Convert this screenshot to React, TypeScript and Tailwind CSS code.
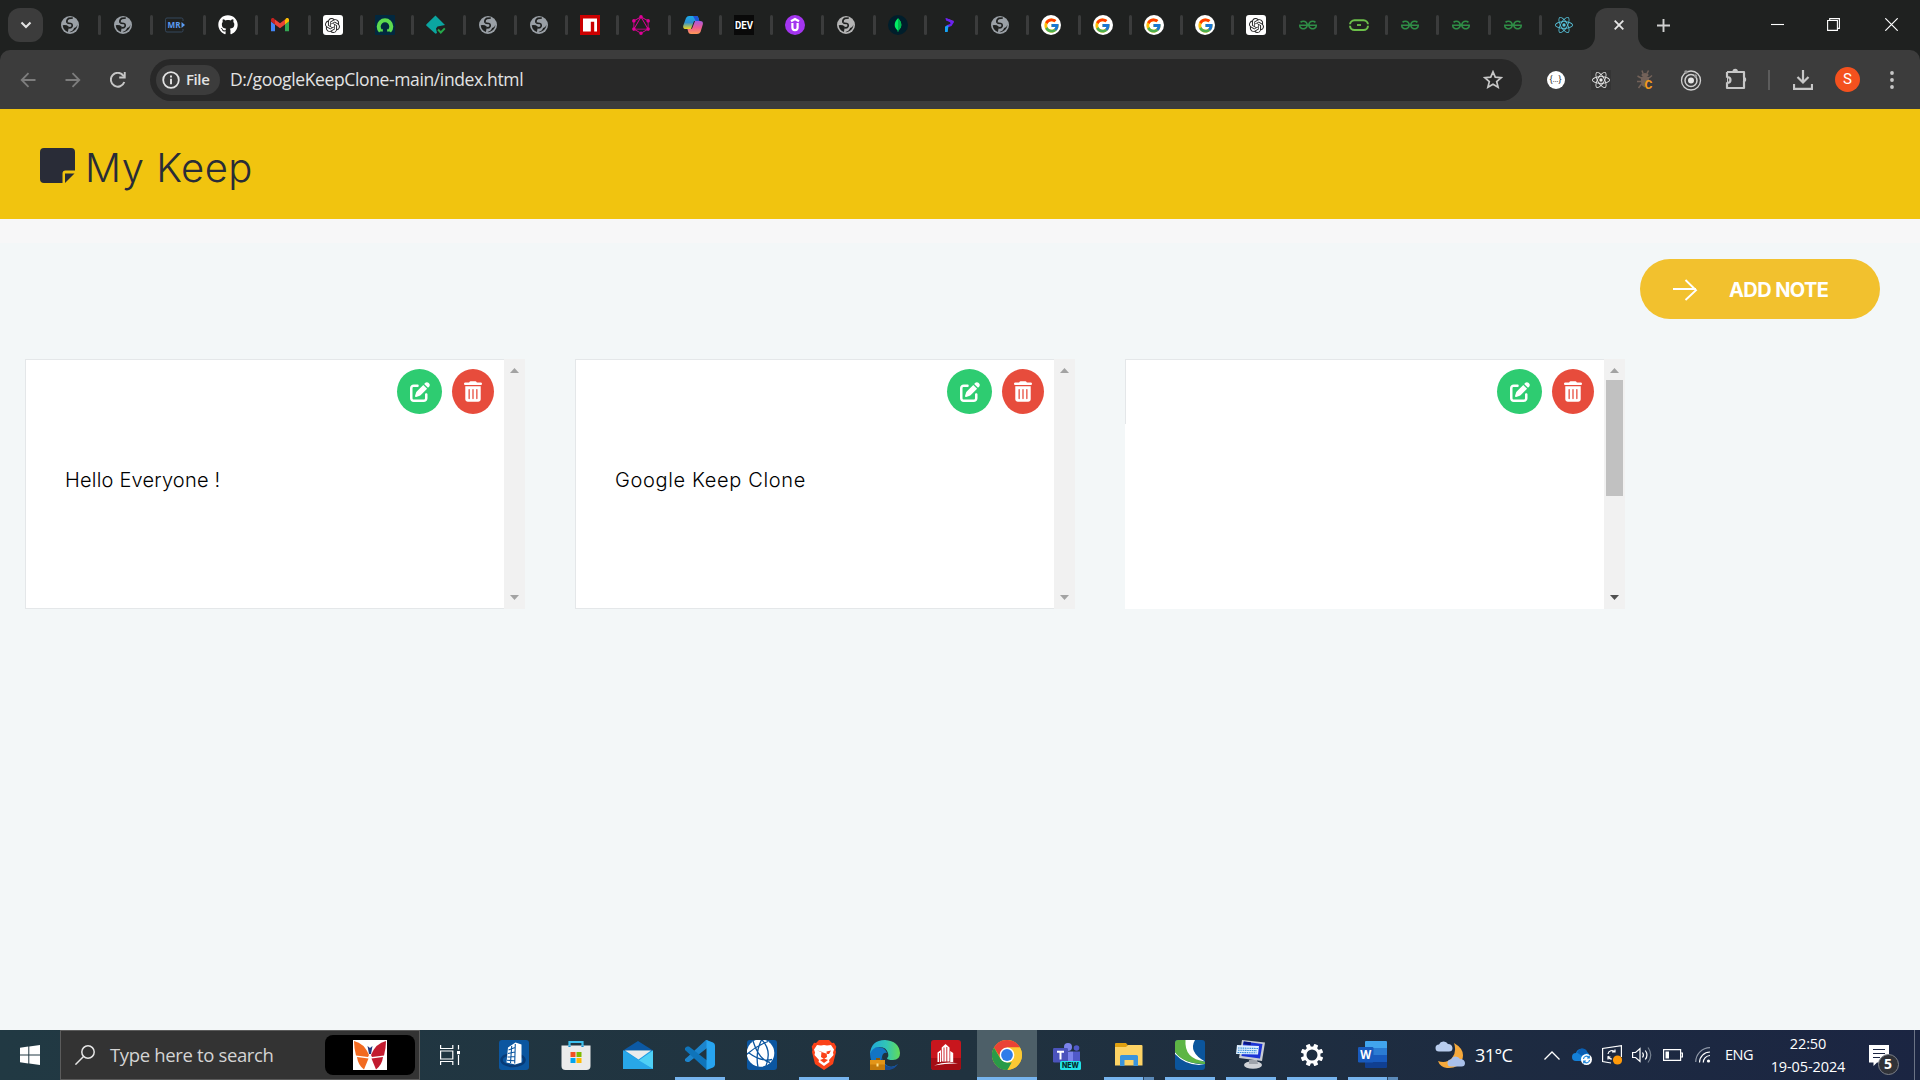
import React, { ReactNode } from "react";
import { FaGithub } from "react-icons/fa";
import { FaPenToSquare, FaTrashCan } from "react-icons/fa6";
import { FcGoogle } from "react-icons/fc";
import { SiOpenai, SiGraphql, SiGeeksforgeeks, SiReact } from "react-icons/si";

const Globe = ({ color = "#9aa0a6" }: { color?: string }) => (
  <svg viewBox="0 0 20 20" className="size-5">
    <circle cx="10" cy="10" r="9" fill={color} />
    <path d="M12.800 3 9 3.300Q6.300 4.800 7 7.300q.6 1.200 3.800 1.200 1.600.3 1.400 2 .2 1.300-1.400 2.200l-2.300.2" fill="none" stroke="#1f2120" strokeWidth="1.700" />
    <path d="M2.700 10.300q3.800-.7 6 1.200.6 1.600-.4 3l-.3 2.600Q3.300 15.500 2.700 10.300Z" fill="#1f2120" />
    <path d="M17.300 9.500q.2 4-3.300 6.300-2.200 1.600-4.500 1.300 3.500-1 4-2.800.3-1.500 1.800-1.800 1.600-.6 2-3Z" fill="#1f2120" />
  </svg>
);
const Gfg = () => <SiGeeksforgeeks className="size-[18px] text-[#2f8d46]" />;
const GoogleTab = () => (
  <span className="flex size-5 items-center justify-center rounded-full bg-white">
    <FcGoogle className="size-[17px]" />
  </span>
);
const OpenAiTab = () => (
  <span className="flex size-5 items-center justify-center rounded-[3px] bg-white">
    <SiOpenai className="size-[15px] text-[#222]" />
  </span>
);
const MrTab = () => (
  <svg viewBox="0 0 20 20" className="size-5 overflow-visible">
    <path d="M18 6V4.500Q18 3 16.500 3H2Q.5 3 .5 4.500V15.500Q.5 17 2 17H16.500Q18 17 18 15.500V14" fill="none" stroke="#35485c" />
    <text x="2.500" y="13.200" fontSize="9.500" fontWeight="700" textLength="13" lengthAdjust="spacingAndGlyphs" fill="#5b9bf0" fontFamily="Open Sans, sans-serif">MR</text>
    <path d="M16.500 7 20 10l-3.500 3Z" fill="#5b9bf0" />
  </svg>
);
const Gmail = () => (
  <svg viewBox="0 0 20 20" className="size-5">
    <path d="M1 5v11.200h4V9.500L1 6.500Z" fill="#4285f4" />
    <path d="M15 9.500v6.700h4V6.500Z" fill="#34a853" />
    <path d="M15 4.500v5l4-3V4.600c0-1.700-2-2-3-1.200Z" fill="#fbbc04" />
    <path d="M5 4.500 10 8.300l5-3.800v5l-5 3.800-5-3.800Z" fill="#ea4335" />
    <path d="M1 4.600c0-1.700 2-2 3-1.200l1 1.100v5l-4-3Z" fill="#c5221f" />
  </svg>
);
const GreenA = () => (
  <svg viewBox="0 0 20 20" className="size-5">
    <rect width="20" height="20" rx="1" fill="#02283f" />
    <path d="M5.500 16A6.300 6.300 0 1 1 14.500 16" fill="none" stroke="#5ddb4f" strokeWidth="4" />
    <path d="M7.600 13.800 4 16.500h4Zm4.800 0 3.600 2.700h-4Z" fill="#5ddb4f" />
  </svg>
);
const TealDiamond = () => (
  <svg viewBox="0 0 20 20" className="size-5">
    <path d="M9.500.5 19 10l-7.500 1.500-1.500 2 1 4.500-1.500.7L.5 10.800q-.6-.8 0-1.600Z" fill="#0ba5a0" />
    <path d="m12 14.500 2.800 3 4-4.200" fill="none" stroke="#25a94b" strokeWidth="1.900" />
  </svg>
);
const Npm = () => (
  <svg viewBox="0 0 20 20" className="size-5">
    <rect width="20" height="20" fill="#cb0000" />
    <path d="M3 3.500h14v13h-2.800V6.800h-3.400v9.700H3Z" fill="#fff" />
  </svg>
);
const Copilot = () => (
  <svg viewBox="0 0 20 20" className="size-5">
    <defs>
      <linearGradient id="cpa" x1="0" y1="0" x2="0" y2="1"><stop stopColor="#1ba9e8" /><stop offset=".5" stopColor="#2f8fcf" /><stop offset="1" stopColor="#f2d61e" /></linearGradient>
      <linearGradient id="cpb" x1="0" y1="0" x2="0" y2="1"><stop stopColor="#a65be0" /><stop offset=".5" stopColor="#ee5b93" /><stop offset="1" stopColor="#ff9a56" /></linearGradient>
    </defs>
    <path d="M6 1h7.500q1.500 0 2 2l.8 3H11L8 14H3Q-.5 14 .3 10.500L3 3Q4 1 6 1Z" fill="url(#cpa)" />
    <path d="M10 1h3.500q1.500 0 2 2l.8 3h-3.500Z" fill="#2054d8" />
    <path d="M14 19H8q-2.500 0-3-3l-.6-2H8q1 0 1.500-1.500L12 6h5q3.500 0 2.800 3.500L17.500 17q-1 2-3.500 2Z" fill="url(#cpb)" />
  </svg>
);
const Dev = () => (
  <svg viewBox="0 0 20 20" className="size-5 overflow-visible">
    <rect width="20" height="20" fill="#090909" />
    <text x="1" y="14" fontSize="11.500" fontWeight="700" textLength="18" lengthAdjust="spacingAndGlyphs" fill="#fff" fontFamily="Roboto, sans-serif">DEV</text>
  </svg>
);
const Udemy = () => (
  <svg viewBox="0 0 20 20" className="size-5">
    <circle cx="10" cy="10" r="10" fill="#a435f0" />
    <path d="m6 6.300 4-2.300 4 2.300M7.400 8v4.500a2.600 2.600 0 0 0 5.200 0V8" fill="none" stroke="#fff" strokeWidth="2.200" />
  </svg>
);
const Mongo = () => (
  <svg viewBox="0 0 20 20" className="size-5">
    <circle cx="10" cy="10" r="10" fill="#001e2b" />
    <path d="M10 3.200c2 2 3.300 4 3.300 6.800 0 2.400-1.400 4-2.800 5.300l-.2 1.500h-.6l-.2-1.500C8 14 6.700 12.400 6.700 10c0-2.800 1.300-4.800 3.300-6.800Z" fill="#00ed64" />
    <path d="M10 3.200c2 2 3.300 4 3.300 6.800 0 2.400-1.400 4-2.800 5.300H10Z" fill="#00b84f" />
  </svg>
);
const PMark = () => (
  <svg viewBox="0 0 20 20" className="size-5">
    <path d="M6.500 3 10 4.200l5 1.800-1.500 2.500-2-.8Z" fill="#8a2be8" />
    <path d="m6.500 3 4.500 1.500 4 2.500-2.500 4-5.500 2 .5-2.700 3.500-1.300 1-1.500-5-2Z" fill="#6a22f0" />
    <path d="m6 11.500 3.500-1.200-.8 6.700H6Z" fill="#14a3f5" />
  </svg>
);
const GreenPill = () => (
  <svg viewBox="0 0 20 20" className="size-5">
    <rect x="1" y="5.300" width="18" height="9.700" rx="4.500" fill="none" stroke="#6cc04a" strokeWidth="2" />
    <path d="M0 9.200h2v1.600H0zM18 9.200h2v1.600h-2z" fill="#1f2120" />
    <path d="M8 10h4" stroke="#6cc04a" strokeWidth="1.800" />
  </svg>
);

const tabs: ReactNode[] = [
  <Globe />, <Globe />, <MrTab />, <FaGithub className="size-5 text-white" />, <Gmail />, <OpenAiTab />, <GreenA />, <TealDiamond />,
  <Globe />, <Globe />, <Npm />, <SiGraphql className="size-5 text-[#e10098]" />, <Copilot />, <Dev />, <Udemy />, <Globe color="#b4b4b4" />,
  <Mongo />, <PMark />, <Globe />, <GoogleTab />, <GoogleTab />, <GoogleTab />, <GoogleTab />, <OpenAiTab />, <Gfg />, <GreenPill />,
  <Gfg />, <Gfg />, <Gfg />, <SiReact className="size-[18px] text-[#58c4dc]" />,
];

function TabStrip() {
  return (
    <div className="flex h-[50px] bg-[#1f2120]">
      <div className="mt-2 ml-2 flex h-[34px] w-[35px] items-center justify-center rounded-xl bg-[#3c3c3c]">
        <svg viewBox="0 0 12 8" className="h-2 w-3"><path d="m1.500 1.500 4.500 4.500 4.500-4.500" fill="none" stroke="#e3e3e3" strokeWidth="2.100" /></svg>
      </div>
      <div className="ml-[5px] flex h-[50px] w-[1547px] items-center">
        {tabs.map((icon, i) => (
          <div key={i} className={`${i < 6 ? "w-[52.5px]" : "w-[51.26px]"} flex shrink-0 items-center pl-3`}>
            <span className="flex size-5 items-center justify-center">{icon}</span>
            {i < 29 && <span className="ml-auto h-5 w-[3px] rounded-sm bg-[#3b3c3c]" />}
          </div>
        ))}
      </div>
      <div className="relative mt-2 flex h-[42px] w-[43px] items-center justify-center rounded-t-xl bg-[#3c3c3c] pb-2 pl-1">
        <svg viewBox="0 0 14 14" className="absolute bottom-0 -left-[14px] size-[14px]"><path d="M0 14A14 14 0 0 0 14 0V14Z" fill="#3c3c3c" /></svg>
        <svg viewBox="0 0 14 14" className="absolute -right-[14px] bottom-0 size-[14px]"><path d="M0 0A14 14 0 0 0 14 14H0Z" fill="#3c3c3c" /></svg>
        <svg viewBox="0 0 10 10" className="size-[10px]"><path d="m.7.7 8.600 8.600M9.300.7.7 9.300" stroke="#e6e6e6" strokeWidth="1.800" /></svg>
      </div>
      <svg viewBox="0 0 13 13" className="mt-[18.5px] ml-[19px] size-[13px]"><path d="M6.500 0v13M0 6.500h13" stroke="#d0d0d0" strokeWidth="1.900" /></svg>
      <svg viewBox="0 0 13 13" className="mt-[18px] ml-[101px] size-[13px]"><path d="M0 6.500h13" stroke="#fff" strokeWidth="1.100" /></svg>
      <svg viewBox="0 0 13 13" className="mt-[18px] ml-[43px] size-[13px]"><path d="M.6 2.500h9.800v9.900H.6ZM2.700 2.500V.6h9.700v9.800h-2" fill="none" stroke="#fff" strokeWidth="1.100" /></svg>
      <svg viewBox="0 0 13 13" className="mt-[18px] ml-[45px] size-[13px]"><path d="m.3.3 12.400 12.400M12.700.3.3 12.700" stroke="#fff" strokeWidth="1.200" /></svg>
    </div>
  );
}

const Slot = ({ w, children }: { w: string; children: ReactNode }) => (
  <div className={`${w} flex shrink-0 items-center justify-center`}>{children}</div>
);

function Toolbar() {
  return (
    <div className="bg-[#1f2120]">
      <div className="flex h-[59px] items-center rounded-t-[10px] bg-[#3c3c3c] pl-[6px]">
        <Slot w="w-[44px]"><svg viewBox="0 0 16 16" className="size-4"><path d="M15.500 8H2M8.500 1.200 1.700 8l6.800 6.800" fill="none" stroke="#7d7d7d" strokeWidth="1.800" /></svg></Slot>
        <Slot w="w-[45px]"><svg viewBox="0 0 16 16" className="size-4"><path d="M.5 8H14M7.500 1.200 14.300 8l-6.800 6.800" fill="none" stroke="#7d7d7d" strokeWidth="1.800" /></svg></Slot>
        <Slot w="w-[46px]"><svg viewBox="0 0 16 16" className="size-4"><path d="M14.300 10A6.900 6.900 0 1 1 13.300 3.600L14 4.500" fill="none" stroke="#c7c7c7" strokeWidth="2" /><path d="M15.700 0v6.500H9.200V4.600h4.600V0Z" fill="#c7c7c7" /></svg></Slot>
        <div className="ml-[9px] flex h-[42px] w-[1372px] items-center rounded-full bg-[#282828] pl-[6px]">
          <div className="flex h-[30px] w-16 items-center rounded-full bg-[#3c3c3c] pl-[6px]">
            <svg viewBox="0 0 18 18" className="size-[18px]"><circle cx="9" cy="9" r="7.800" fill="none" stroke="#e3e3e3" strokeWidth="1.800" /><path d="M9 7.800v5.400M9 4.600v2" stroke="#e3e3e3" strokeWidth="1.900" /></svg>
            <span className="ml-[6px] font-['Open_Sans'] text-[15px] font-semibold tracking-[-0.4px] text-[#e3e3e3]">File</span>
          </div>
          <span className="ml-[10px] font-['Open_Sans'] text-[17.5px] tracking-[-0.37px] whitespace-nowrap text-[#e3e3e3]">D:/googleKeepClone-main/index.html</span>
          <svg viewBox="0 0 20 20" className="mr-[19px] ml-auto size-5"><path d="m10 1.800 2.300 5.400 5.900.5-4.500 3.900 1.400 5.700L10 14.200l-5.100 3.100 1.400-5.700L1.800 7.700l5.900-.5Z" fill="none" stroke="#c7c7c7" strokeWidth="1.700" /></svg>
        </div>
        <div className="ml-[11px] flex">
          <Slot w="w-[45px]"><span className="flex size-[18px] items-center justify-center rounded-full bg-white font-['Roboto'] text-[9px] leading-none text-[#333]">{"{…}"}</span></Slot>
          <Slot w="w-[45px]"><span className="flex size-5 items-center justify-center bg-[#343434]"><SiReact className="size-[18px] text-[#e8e8e8]" /></span></Slot>
          <Slot w="w-[45px]">
            <svg viewBox="0 0 20 20" className="size-5 overflow-visible">
              <path d="M7 3.500 6 .5m5 3L12.500.5M5 8 1.500 6M5 11.500H1M5.500 14 2.500 18M13 8l3-2.500" fill="none" stroke="#736259" strokeWidth="1.500" />
              <ellipse cx="9" cy="5" rx="3.500" ry="2" fill="#736259" /><path d="M5 7h8v4l-4 6.500Q5 16 5 12Z" fill="#736259" />
              <text x="8.500" y="18.600" fontSize="12" fontWeight="700" fill="#f59a1b" fontFamily="Roboto, sans-serif">C</text>
            </svg>
          </Slot>
          <Slot w="w-[46px]">
            <svg viewBox="0 0 22 22" className="size-[22px]"><circle cx="11" cy="11.500" r="9.500" fill="none" stroke="#d0d0d0" strokeWidth="1.300" /><circle cx="11" cy="11.500" r="6" fill="none" stroke="#d0d0d0" strokeWidth="1.500" /><circle cx="11" cy="11.500" r="3" fill="#e4e4e4" /><circle cx="6" cy="3" r="1.800" fill="#999" /><circle cx="15.500" cy="7" r="1.700" fill="#999" /></svg>
          </Slot>
          <Slot w="w-[45px]">
            <svg viewBox="0 0 22 22" className="size-[22px] -translate-x-[1px] -translate-y-[1px]"><path d="M2 4h17v5.500M19 13v7H2V4M2 4v5q3.500 0 3.500 3T2 15" fill="none" stroke="#c7c7c7" strokeWidth="2.200" strokeLinejoin="round" /><path d="M.5 9.800h1.500v4.400H.5z" fill="#3c3c3c" /><path d="M7.500 3.500a2.700 2.700 0 0 1 5.400 0ZM18.500 8.800a2.700 2.700 0 0 1 0 5.400ZM18 8.800h2v5.400h-2z" fill="#c7c7c7" /></svg>
          </Slot>
        </div>
        <span className="ml-[9px] h-5 w-[2px] bg-[#5c5c5c]" />
        <svg viewBox="0 0 20 20" className="ml-[23px] size-5"><path d="M10 0v12M4.500 7 10 12.500 15.500 7M1 14v4.800h18V14" fill="none" stroke="#c7c7c7" strokeWidth="2.200" /></svg>
        <span className="ml-[22px] flex size-[25px] items-center justify-center rounded-full bg-[#f4511e] font-['Roboto'] text-[15px] text-white">S</span>
        <svg viewBox="0 0 4 18" className="ml-[30px] h-[18px] w-1"><circle cx="2" cy="2" r="1.900" fill="#c7c7c7" /><circle cx="2" cy="9" r="1.900" fill="#c7c7c7" /><circle cx="2" cy="16" r="1.900" fill="#c7c7c7" /></svg>
      </div>
    </div>
  );
}

function Note({ text, tracking, scroll }: { text?: string; tracking?: string; scroll?: boolean }) {
  return (
    <div className="flex h-[250px] w-[500px] bg-white">
      <div className={`flex w-[479px] flex-col border-[#e4e7e9] ${scroll ? "border-t" : "border-y border-l"}`}>
        <div className={`flex justify-end gap-[10px] pt-[9px] pr-[10px] ${scroll ? "h-16 border-l border-[#e4e7e9]" : "h-[54px]"}`}>
          <span className="flex h-[45px] w-[45px] items-center justify-center rounded-[50%] bg-[#2ecc71]"><FaPenToSquare className="size-5 text-white" /></span>
          <span className="flex h-[45px] w-[42px] items-center justify-center rounded-[50%] bg-[#e74c3c]"><FaTrashCan className="h-[21px] w-[18px] text-white" /></span>
        </div>
        {text && <p className={`${tracking} mt-[51px] pl-[39px] font-['Inter'] text-[20px] leading-[30px] font-[350] text-black`}>{text}</p>}
      </div>
      <div className="flex w-[21px] flex-col items-center bg-[#f1f1f1] py-[9px]">
        <svg viewBox="0 0 9 5" className="h-[5px] w-[9px]"><path d="M0 5 4.500 0 9 5Z" fill="#a3a3a3" /></svg>
        {scroll && <span className="mt-[7px] h-[116px] w-[17px] bg-[#c1c1c1]" />}
        <svg viewBox="0 0 9 5" className="mt-auto h-[5px] w-[9px]"><path d="M0 0h9L4.500 5Z" fill={scroll ? "#505050" : "#a3a3a3"} /></svg>
      </div>
    </div>
  );
}

function Page() {
  return (
    <main className="flex h-[921px] flex-col bg-[#f3f7f8]">
      <header className="flex h-[110px] items-center bg-[#f1c40f] pl-10 text-[#292c37]">
        <svg viewBox="0 0 35 35" className="mt-[3px] size-[35px]">
          <path d="M4 0h27q4 0 4 4v18.500H25.500q-3 0-3 3V35H4q-4 0-4-4V4q0-4 4-4Z" fill="currentColor" />
          <path d="M25 25.500h9.500L25 35Z" fill="currentColor" />
        </svg>
        <h1 className="mt-[7px] ml-[10px] font-['Inter'] text-[40px] leading-none font-[320] tracking-[0.5px]">My Keep</h1>
      </header>
      <div className="h-6 bg-[#f7f7f8]" />
      <div className="flex justify-end pt-4 pr-10">
        <button className="flex h-[60px] w-[240px] items-center rounded-[30px] bg-[#f2c12e] pl-[33px]">
          <svg viewBox="0 0 25 22" className="h-[22px] w-[25px] translate-y-[1px]"><path d="M0 10h23M12.500 1 23 11.200 12.500 21" fill="none" stroke="#fff" strokeWidth="1.900" /></svg>
          <span className="mt-[2px] ml-[31px] font-['Inter'] text-[20px] font-bold tracking-[-0.6px] whitespace-nowrap text-white">ADD NOTE</span>
        </button>
      </div>
      <section className="mt-10 flex gap-[50px] pl-[25px]">
        <Note text="Hello Everyone !" tracking="tracking-[0.2px]" />
        <Note text="Google Keep Clone" tracking="tracking-[0.65px]" />
        <Note scroll />
      </section>
    </main>
  );
}

const Building = () => (
  <svg viewBox="0 0 30 30" className="size-[30px]">
    <rect width="30" height="30" rx="3" fill="#0b56a0" /><ellipse cx="14" cy="20" rx="11.500" ry="6" fill="none" stroke="#073b78" strokeWidth="2.500" />
    <path d="m9 7.500 7.500-5 6 2v18L16 24.500l-8.500-2Z" fill="#fff" />
    <path d="m16.300 4-.6 19.500M9.500 10l6.500-2.500M9 13.500l6.700-1.500M8.500 17l7-.5M8 20.300l7.500.5M12.700 6 11.500 23" fill="none" stroke="#0b56a0" strokeWidth="1.100" />
  </svg>
);
const Store = () => (
  <svg viewBox="0 0 30 30" className="size-[30px]">
    <path d="M8.500 7V2h13v5" fill="none" stroke="#3cc0ee" strokeWidth="2.200" />
    <path d="M.5 5.500h29V26q0 4-4 4h-21q-4 0-4-4Z" fill="#ebebeb" />
    <path d="M9.500 12h5v5h-5z" fill="#f25022" /><path d="M15.500 12h5v5h-5z" fill="#7fba00" /><path d="M9.500 18h5v5h-5z" fill="#00a4ef" /><path d="M15.500 18h5v5h-5z" fill="#ffb900" />
    <path d="M8.500 5.500V7M21.500 5.500V7" stroke="#1590d0" strokeWidth="2.200" />
  </svg>
);
const Mail = () => (
  <svg viewBox="0 0 30 30" className="size-[30px]">
    <path d="M0 10.500 15 1l15 9.500Z" fill="#0c59a4" /><path d="M0 10.500h30v18.500H0Z" fill="#1f9be2" />
    <path d="M2 10.500h26L15.500 19.500Z" fill="#ececec" /><path d="m30 10.500-15 10.500L30 29Z" fill="#4fd0f5" /><path d="m0 10.500 30 18.500H0Z" fill="#28a7e8" />
  </svg>
);
const VsCode = () => (
  <svg viewBox="0 0 30 30" className="size-[30px]">
    <path d="M22 0 3 17.500 0 20v2l2 1h2L24 7.500Z" fill="#1c84cc" transform="translate(0 -1)" />
    <path d="M2 6.500 0 8v2l22 20 2-8L4 6.500Z" fill="#0f74ba" /><path d="m21.500 0 6.500 2.500q2 .8 2 3v19q0 2.200-2 3L21.500 30Z" fill="#27a4f0" />
  </svg>
);
const Ball = () => (
  <svg viewBox="0 0 30 30" className="size-[30px]">
    <defs><clipPath id="ballclip"><rect width="30" height="30" rx="3" /></clipPath></defs>
    <g clipPath="url(#ballclip)">
      <rect width="30" height="30" fill="#0b56a0" /><circle cx="13.500" cy="13" r="13.800" fill="#fff" />
      <path d="M-1 15Q9 6 21 1.500M6 1Q12 20 23 22.500M2 13Q14 22 25 19.500M15-1Q8 12 11 27M15 0Q25 10 19 26" fill="none" stroke="#0b56a0" strokeWidth="1.300" />
    </g>
  </svg>
);
const Brave = () => (
  <svg viewBox="0 0 30 30" className="size-[30px]">
    <path d="M7 3 10 0h10l3 3 2-.3 2.300 4L26.500 10 27 12l-3 12-9 6-9-6L3 12l.5-2L2.700 6.700l2.300-4Z" fill="#fb4218" />
    <path d="m8 5 4 .6 3-.6 3 .6 4-.6 3 4.500-1 3 .5 2.500-4.500 5 .5 2-5.500 4-5.500-4 .5-2-4.500-5 .5-2.500-1-3Z" fill="#fff" />
    <path d="m8 10.500 4.500 1-.5 5.500 3 2 3-2-.5-5.500 4.500-1-2 3.500-1.500 0m-7 0H10Z" fill="#fb4218" /><path d="m11 20 4-1.500L19 20l-4 3Z" fill="#fb4218" />
  </svg>
);
const Edge = () => (
  <svg viewBox="0 0 30 30" className="size-[30px]">
    <defs><linearGradient id="edg"><stop stopColor="#1fa8dc" /><stop offset=".55" stopColor="#32c5b5" /><stop offset="1" stopColor="#63dc57" /></linearGradient></defs>
    <path d="M0 14Q1 7 8 7q7 0 9 6-4-1-5 4 0 6 6 9 5 2 10-2-5 6-13 6Q1 29 0 14Z" fill="#1274c4" />
    <path d="M12 17q-1 8 8 10 5 0 8-3-4 7-14 6-6-5-2-13Z" fill="#184a90" />
    <path d="M0 14Q1 0 15 0q14 1 15 13 0 7-7 7-6 0-6-2 2-1 1-5Q16 6 8 7 2 8 0 14Z" fill="url(#edg)" />
    <path d="M0 20h15v10H0Z" fill="#c47a0a" /><path d="M0 20h15v4.500H0Z" fill="#e39518" /><path d="M6 18h4v2H6Z" fill="#8c5706" /><path d="M6.500 23.500h2v3h-2z" fill="#ffe28a" />
  </svg>
);
const RedTower = () => (
  <svg viewBox="0 0 30 30" className="size-[30px]">
    <rect width="30" height="30" rx="3" fill="#c8161d" /><path d="M0 18h30v9q0 3-3 3H3q-3 0-3-3Z" fill="#a50d14" />
    <path d="M6.500 12.500 10 10v12H6.500ZM10.700 7.500 14.500 4l4 3.500v14h-7.800ZM19.200 11l3 2v9h-3ZM3 25.500q11-4.500 24-2-10-.5-24 2Z" fill="#fff" />
    <path d="M13 7.500v14M15.800 7v15M8.500 13v9" stroke="#c8161d" strokeWidth=".9" />
  </svg>
);
const Chrome = () => (
  <svg viewBox="0 0 30 30" className="size-[30px]">
    <circle cx="15" cy="15" r="15" fill="#ffc61a" />
    <path d="M2 7.500A15 15 0 0 1 28 7.500H15L9 18.500Z" fill="#ea4335" /><path d="M2 7.500 8.500 18.750 15 22.500h6L15.500 30A15 15 0 0 1 2 7.500Z" fill="#2a9a48" />
    <path d="M28 7.500A15 15 0 0 1 15.500 30L21.500 19 22.500 15 15 7.500Z" fill="#fcc934" />
    <circle cx="15" cy="15" r="7.400" fill="#fff" /><circle cx="15" cy="15" r="5.900" fill="#2f7de9" />
  </svg>
);
const Teams = () => (
  <svg viewBox="0 0 30 30" className="size-[30px] overflow-visible">
    <circle cx="15" cy="7" r="4" fill="#7b83eb" /><circle cx="23.500" cy="8" r="2.800" fill="#5059c9" />
    <path d="M10 11.500h10V25H10Z" fill="#7b83eb" /><path d="M20 11.500h7V22h-7Z" fill="#5059c9" /><rect y="8" width="15" height="14.500" rx="1.200" fill="#4b53bc" />
    <path d="M4 11.800h7M7.500 12v7.500" stroke="#fff" strokeWidth="2" /><rect x="7" y="21" width="21" height="9" rx="1.500" fill="#22e0e6" />
    <text x="9" y="28.400" fontSize="8" fontWeight="800" textLength="17" lengthAdjust="spacingAndGlyphs" fill="#062a2c" fontFamily="Inter, sans-serif">NEW</text>
  </svg>
);
const Explorer = () => (
  <svg viewBox="0 0 30 30" className="size-[30px]">
    <path d="M1 4q0-1 1-1h10l2 2.500V9H1Z" fill="#e0a010" /><path d="M1 7h11l2-2h13.500q1 0 1 1v19.500H1Z" fill="#fdd365" />
    <path d="M6 26V16.500q0-1.500 1.500-1.500h15q1.500 0 1.500 1.500V26h-4.500v-6H10.500v6Z" fill="#3a94dc" />
  </svg>
);
const Wave = () => (
  <svg viewBox="0 0 30 30" className="size-[30px]">
    <rect width="30" height="30" rx="3" fill="#0b559c" />
    <path d="M0 12Q10 24 30 24.500Q12 27 0 14Z" fill="#fff" /><path d="M3 0h8Q10 17 30 22v2Q8 24 0 12V3q0-3 3-3Z" fill="#5db545" />
    <path d="M10.500 0H20Q13 12 30 21.500Q9 19 10.500 0Z" fill="#fff" />
  </svg>
);
const OldPc = () => (
  <svg viewBox="0 0 30 30" className="size-[30px]">
    <ellipse cx="17" cy="25" rx="9" ry="3.800" fill="#cfd2d6" /><path d="m13 20 8 0 1 4h-9Z" fill="#9ea3aa" />
    <path d="m6 0 23 2.500-3 18.500L3 18Z" fill="#c9ccd2" /><path d="m7.500 1.500 19 2.500-2.500 14.500L5.500 16Z" fill="#1c34d6" /><path d="m8 1.500 7 .8-.3 3L7.500 4Z" fill="#0a1580" />
    <path d="m1 5 22 1-1 8.500L0 14Z" fill="#ddeeff" /><path d="m2 8 20 .5M2 10.200l19 .5M1.500 12.500l19 .3" stroke="#3c8fd8" strokeWidth="1.100" strokeDasharray="1.600 .7" />
  </svg>
);
const Gear = () => (
  <svg viewBox="0 0 30 30" className="size-[30px]">
    <circle cx="15" cy="15" r="7" fill="none" stroke="#fff" strokeWidth="3" />
    <g fill="#fff">
      {[22.5, 67.5, 112.5, 157.5, 202.5, 247.5, 292.5, 337.5].map((a) => <rect key={a} x="12.900" y="3.700" width="4.200" height="4.500" rx=".6" transform={`rotate(${a} 15 15)`} />)}
    </g>
  </svg>
);
const Word = () => (
  <svg viewBox="0 0 30 30" className="size-[30px]">
    <path d="M7 2q0-1 1-1h20q1 0 1 1v6H7Z" fill="#41a5ee" /><path d="M7 8h22v7H7Z" fill="#2b7cd3" /><path d="M7 15h22v7H7Z" fill="#185abd" /><path d="M7 22h22v5q0 1-1 1H8q-1 0-1-1Z" fill="#103f91" />
    <rect y="7" width="15.500" height="15.500" rx="1.200" fill="#185abd" />
    <text x="2.300" y="19" fontSize="12" fontWeight="700" textLength="11" lengthAdjust="spacingAndGlyphs" fill="#fff" fontFamily="Open Sans, sans-serif">W</text>
  </svg>
);

type App = { icon: ReactNode; state?: "run" | "active" | "multi" };
const apps: App[] = [
  { icon: <Building /> }, { icon: <Store /> }, { icon: <Mail /> }, { icon: <VsCode />, state: "run" }, { icon: <Ball /> },
  { icon: <Brave />, state: "run" }, { icon: <Edge /> }, { icon: <RedTower /> }, { icon: <Chrome />, state: "active" }, { icon: <Teams /> },
  { icon: <Explorer />, state: "multi" }, { icon: <Wave />, state: "run" }, { icon: <OldPc />, state: "run" }, { icon: <Gear />, state: "run" }, { icon: <Word />, state: "multi" },
];

function Taskbar() {
  return (
    <footer className="flex h-[50px] items-center bg-linear-to-r from-[#213943] via-[#20323f] to-[#1b2542] font-['Open_Sans'] text-white">
      <Slot w="w-[60px]"><svg viewBox="0 0 20 20" className="size-5"><path d="M0 2.800 8.300 1.600V9.500H0ZM9.300 1.400 20 0v9.500H9.300ZM0 10.500h8.300v7.900L0 17.300ZM9.300 10.500H20V20L9.300 18.600Z" fill="#fff" /></svg></Slot>
      <div className="flex h-[50px] w-[360px] items-center border border-[#5b5b5b] bg-[#333] pr-1 pl-[14px]">
        <svg viewBox="0 0 20 20" className="size-5"><circle cx="13" cy="7" r="6.200" fill="none" stroke="#e6e6e6" strokeWidth="1.500" /><path d="M8.500 11.500.4 19.600" stroke="#e6e6e6" strokeWidth="1.500" /></svg>
        <span className="ml-[15px] text-[18.5px] tracking-[-0.35px] whitespace-nowrap text-[#d4d4d4]">Type here to search</span>
        <span className="ml-auto flex h-10 w-[90px] items-center justify-center rounded-lg bg-black">
          <svg viewBox="0 0 34 30" className="h-[30px] w-[34px]">
            <rect width="34" height="30" fill="#fff" /><path d="M1 1q10 2 15 14l-1 2-12-1.500Q1 8 1 1Z" fill="#f26a21" /><path d="m4 17 11.500 1.500L11 29.500Q5 25 4 17Z" fill="#f26a21" />
            <path d="M33 1q-10 2-15 14l1 2 12-1.500Q33 8 33 1Z" fill="#c21b2f" /><path d="m30 17-11.500 1.500L23 29.500Q29 25 30 17Z" fill="#c21b2f" /><path d="m14.500 6 2.500 2 2.500-2-1.500 8h-2Z" fill="#223a80" />
          </svg>
        </span>
      </div>
      <Slot w="w-[60px]"><svg viewBox="0 0 20 20" className="size-5"><path d="M.6 0v3.500h12.200V0M.6 20v-3.500h12.200V20M.6 6h12.200v8H.6ZM18.500 0v4.500M18.500 10v10" fill="none" stroke="#fff" strokeWidth="1.200" /><path d="M17 6h3v3.200h-3z" fill="#fff" /></svg></Slot>
      <div className="ml-[3px] flex w-[923px]">
        {apps.map(({ icon, state }, i) => (
          <div key={i} className={`${i < 5 ? "w-[62px]" : "w-[61px]"} flex h-[50px] shrink-0 justify-center`}>
            <div className={`flex flex-col items-center ${state === "active" ? "w-[60px] bg-[#4d5f68]" : "w-[50px]"}`}>
              <span className="mt-[10px] h-[37px]">{icon}</span>
              {state && (
                <span className="flex h-[3px] w-full bg-[#76b4ee]">
                  {state === "multi" && <span className="ml-auto h-[3px] w-[11px] border-l border-[#2b4560] bg-[#5b8ab9]" />}
                </span>
              )}
            </div>
          </div>
        ))}
      </div>
      <svg viewBox="0 0 30 30" className="ml-[29px] size-[30px]">
        <path d="M19 3q12 7 8 17-4 9-15 8-7-1-9-7 8 3 14-3 5-6 2-15Z" fill="#f6a93b" />
        <path d="M4 11.500a3.500 3.500 0 0 1 0-7A5 5 0 0 1 13 4q4 0 4.500 4 0 3.500-3.500 3.500Z" fill="#b9cdee" /><path d="M16 26.500a3.500 3.500 0 0 1 0-7 5 5 0 0 1 9-.5q4.500 0 5 4 0 3.500-3.500 3.500Z" fill="#a9c0ea" />
      </svg>
      <span className="ml-[10px] w-[60px] text-[18px] tracking-[-0.6px]">31°C</span>
      <svg viewBox="0 0 16 9" className="ml-[9px] h-[9px] w-4"><path d="m.5 8.500 7.500-7.500 7.500 7.500" fill="none" stroke="#fff" strokeWidth="1.300" /></svg>
      <svg viewBox="0 0 20 17" className="ml-3 h-[17px] w-5 translate-y-[1px]"><path d="M4 13a4 4 0 0 1 0-8 6 6 0 0 1 11-1q3 2 3 5v4Z" fill="#1480d8" /><path d="M5 4.500Q7 0 11 .5q3.500.5 4.500 4L10 8Z" fill="#0a5fb4" /><circle cx="14.500" cy="11.500" r="5.500" fill="#fff" /><path d="M11.500 11a3 3 0 0 1 5.500-1.500m.5 2.500a3 3 0 0 1-5.500 1.500M17.300 7.500V10H15M11.700 15.500V13H14" fill="none" stroke="#1480d8" strokeWidth="1.100" /></svg>
      <svg viewBox="0 0 20 20" className="ml-[10px] size-5"><path d="M9 18 .6 16.500V3.500L19.400.7V12" fill="none" stroke="#fff" strokeWidth="1.200" /><path d="M6 9a4 4 0 0 1 7-2M6 11a4 4 0 0 0 4 3M13 4.500V7h-3M6 14.500V12h2.500" fill="none" stroke="#fff" strokeWidth="1.200" /><circle cx="15.500" cy="15" r="4.600" fill="#ff9a0a" /></svg>
      <svg viewBox="0 0 20 20" className="ml-[10px] size-5"><path d="M.6 7.500h3L8 3.500v13l-4.400-4H.6Z" fill="none" stroke="#fff" strokeWidth="1.200" /><path d="M10.500 7.500q1.800 2.500 0 5M13.300 5.500q3.300 4.500 0 9" fill="none" stroke="#fff" strokeWidth="1.200" /><path d="M16 2.500q5.500 7.500 0 15" fill="none" stroke="#75808f" strokeWidth="1.200" /></svg>
      <svg viewBox="0 0 20 12" className="ml-[11px] h-3 w-5"><path d="M.6.6h17v10.800H.6ZM18 4h1.400v4H18" fill="none" stroke="#fff" strokeWidth="1.200" /><path d="M2.500 2.500h3.500v7H2.500z" fill="#fff" /></svg>
      <svg viewBox="0 0 16 16" className="ml-3 size-4"><path d="M.7 15A14.500 14.500 0 0 1 15 .7" fill="none" stroke="#8f98a8" strokeWidth="1.200" /><path d="M4.500 15.500A10.500 10.500 0 0 1 15 5M8.300 15.500A7 7 0 0 1 15 8.500" fill="none" stroke="#fff" strokeWidth="1.200" /><circle cx="13.500" cy="14" r="1.600" fill="#fff" /></svg>
      <span className="ml-[14px] w-[33px] text-[14.5px] tracking-[-0.5px]">ENG</span>
      <div className="ml-[8px] flex w-[84px] flex-col items-center text-[14.5px] leading-[23px] tracking-[-0.1px] whitespace-nowrap">
        <span>22:50</span>
        <span>19-05-2024</span>
      </div>
      <div className="relative mt-[10px] ml-[19px] h-[30px] w-[30px]">
        <svg viewBox="0 0 30 30" className="size-[30px]"><path d="M0 0h20v17.500H8L4.500 21v-3.500H0Z" fill="#fff" /><path d="M4 4.500h12M4 8.500h12M4 12.500h7" stroke="#1b2542" strokeWidth="1.200" /></svg>
        <span className="absolute top-[8.500px] left-[8.500px] flex size-[21px] items-center justify-center rounded-full border border-[#7c8088] bg-[#303238] text-[14px] leading-none font-bold">5</span>
      </div>
      <span className="ml-[15px] h-[50px] w-px bg-[#6b7385]" />
    </footer>
  );
}

export default function App() {
  return (
    <div className="flex h-[1080px] w-[1920px] flex-col overflow-hidden">
      <TabStrip />
      <Toolbar />
      <Page />
      <Taskbar />
    </div>
  );
}
